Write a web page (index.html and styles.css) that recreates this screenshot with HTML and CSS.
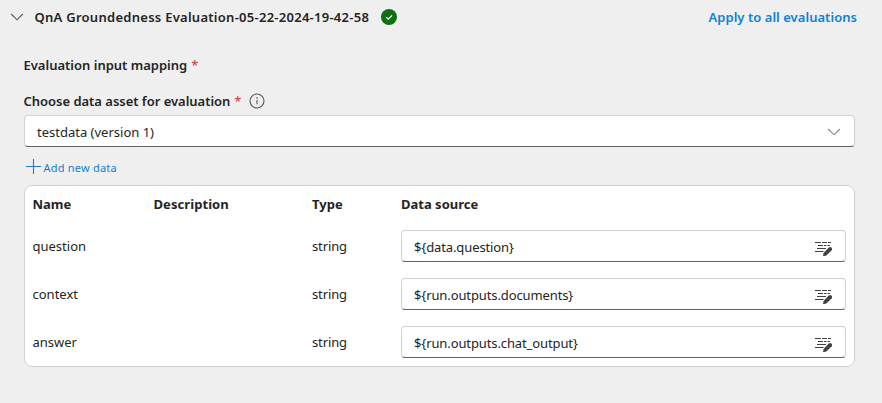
FILE: index.html
```html
<!DOCTYPE html>
<html lang="en">
<head>
<meta charset="utf-8">
<title>Evaluation input mapping</title>
<link rel="stylesheet" href="styles.css">
</head>
<body>
<svg class="defs" width="0" height="0" aria-hidden="true">
  <symbol id="edit" viewBox="0 0 18 16">
    <path d="M0 2.500h6M7 2.500h5M13 2.500h3M3 5.500h5M9 5.500h2.500M12.500 5.500h2.500M2 8.500h9M0 11.500h8.500" fill="none" stroke="#424242" stroke-width="1"/>
    <path d="M13.500 7.700q1.600-1.300 2.900-.1t.2 2.900l-5.300 5-3.300.8.500-3.300z" fill="#424242"/>
  </symbol>
</svg>
<main class="panel">
  <header class="header">
    <svg class="chevron" width="14" height="8" viewBox="0 0 14 8"><path d="M1.200 1l5.800 5.800L12.800 1" fill="none" stroke="#555" stroke-width="1.100"/></svg>
    <h1 class="title">QnA Groundedness Evaluation-05-22-2024-19-42-58</h1>
    <svg class="check" width="16" height="16" viewBox="0 0 16 16"><circle cx="8" cy="8" r="8" fill="#0e700e"/><path d="M5.200 8.200l2 2 3.900-3.900" fill="none" stroke="#fff" stroke-width="1.200"/></svg>
    <a class="apply">Apply to all evaluations</a>
  </header>
  <section class="content">
    <div class="label mapping">Evaluation input mapping<span class="star">*</span></div>
    <div class="label asset">Choose data asset for evaluation<span class="star">*</span>
      <svg class="info" width="16" height="16" viewBox="0 0 16 16"><circle cx="8" cy="8" r="7" fill="none" stroke="#555" stroke-width="1.100"/><path d="M8 7v4.300" stroke="#555" stroke-width="1.100"/><circle cx="8" cy="5" r=".8" fill="#555"/></svg>
    </div>
    <div class="field select"><span>testdata (version 1)</span>
      <svg width="14" height="8" viewBox="0 0 14 8"><path d="M1.200 1l5.800 5.800L12.800 1" fill="none" stroke="#888" stroke-width="1.100"/></svg>
    </div>
    <a class="add"><svg width="15" height="15" viewBox="0 0 15 15"><path d="M0 7.500h15M7.500 0v15" stroke="#0f7fd4" stroke-width="1.100"/></svg><span>Add new data</span></a>
    <div class="card">
      <div class="row head"><b>Name</b><b class="description">Description</b><b>Type</b><b>Data source</b></div>
      <div class="row"><span>question</span><span></span><span class="type">string</span><div class="field value"><span>${data.question}</span><svg width="18" height="16"><use href="#edit"/></svg></div></div>
      <div class="row"><span>context</span><span></span><span class="type">string</span><div class="field value"><span>${run.outputs.documents}</span><svg width="18" height="16"><use href="#edit"/></svg></div></div>
      <div class="row"><span>answer</span><span></span><span class="type">string</span><div class="field value"><span>${run.outputs.chat_output}</span><svg width="18" height="16"><use href="#edit"/></svg></div></div>
    </div>
  </section>
</main>
</body>
</html>
```
FILE: styles.css
```css
* { box-sizing: border-box; }
body { margin: 0; height: 403px; overflow: hidden; background: #efefef; color: #242424; font: 13px/20px "Noto Sans", "Open Sans", sans-serif; white-space: nowrap; }
.defs { display: block; height: 0; }
svg { flex: none; }
.header { display: flex; align-items: center; height: 34px; padding: 0 25px 0 10px; }
.title { margin: 0 12px 0 10.500px; font-size: 13px; line-height: 20px; font-weight: 600; letter-spacing: .27px; }
.apply { margin-left: auto; color: #0f7fd4; font-weight: 600; letter-spacing: .04px; }
.content { padding: 21px 27px 0 24px; }
.label { display: flex; align-items: center; height: 20px; margin-left: -.5px; font-weight: 600; }
.asset { margin-top: 16px; letter-spacing: -.02px; }
.star { margin-left: 4px; color: #d13438; font-weight: 400; }
.info { margin-left: 7px; }
.field { display: flex; align-items: center; justify-content: space-between; height: 32px; padding: 2px 13px 0 12px; background: #fff; border: 1px solid #d1d1d1; border-bottom-color: #616161; border-radius: 4px; }
.select { margin-top: 4px; }
.value { padding-right: 12px; letter-spacing: -.11px; }
.value svg { margin-top: 1px; }
.add { display: flex; align-items: center; gap: 2.500px; height: 20px; margin: 11px 0 7px 2px; color: #0f7fd4; font-size: 11px; letter-spacing: .22px; }
.add svg { margin-top: -3px; }
.card { height: 182px; padding: 0 8px 0 7.500px; background: #fff; border: 1px solid #d1d1d1; border-radius: 8px; }
.row { display: grid; grid-template-columns: 121px 158.500px 89px 445px; align-items: center; height: 48px; }
.head { height: 36px; }
.description { letter-spacing: .07px; }
.type { letter-spacing: -.12px; }
b { font-weight: 700; }
```
